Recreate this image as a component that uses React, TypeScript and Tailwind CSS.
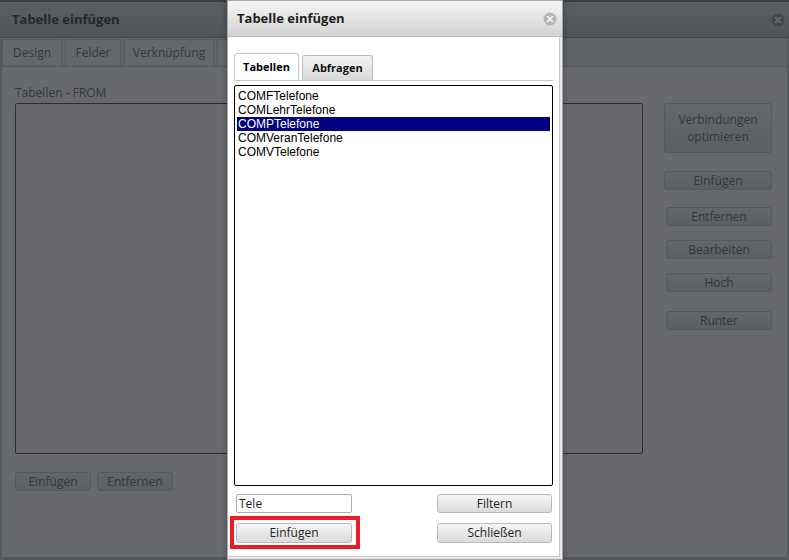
import React from "react";

const ui = { fontFamily: '"Open Sans", "Noto Sans", sans-serif' };
const arial = { fontFamily: '"Liberation Sans", Arial, sans-serif' };

function BgBtn({ children, className = "" }: { children: React.ReactNode; className?: string }) {
  return (
    <div
      className={`flex items-center justify-center rounded-[3px] border border-[#55585c] bg-gradient-to-b from-[#63666a] to-[#5c5f63] text-[12px] text-[#35373a] ${className}`}
    >
      {children}
    </div>
  );
}

function FgBtn({ children, className = "" }: { children: React.ReactNode; className?: string }) {
  return (
    <div
      className={`flex items-center justify-center rounded-[3px] border border-[#b9b9b9] bg-gradient-to-b from-[#f6f6f6] to-[#dadada] text-[12px] text-[#222] ${className}`}
    >
      {children}
    </div>
  );
}

function CloseIcon({ dark }: { dark?: boolean }) {
  return (
    <svg width="14" height="14" viewBox="0 0 14 14">
      <circle cx="7" cy="7" r="6.5" fill={dark ? "#45484c" : "#b5b5b5"} />
      <path d="M4.6 4.6 L9.4 9.4 M9.4 4.6 L4.6 9.4" stroke={dark ? "#6a6d71" : "#f2f2f2"} strokeWidth="1.8" strokeLinecap="round" />
    </svg>
  );
}

export default function App() {
  const items = ["COMFTelefone", "COMLehrTelefone", "COMPTelefone", "COMVeranTelefone", "COMVTelefone"];
  return (
    <div className="relative h-[560px] w-[789px] overflow-hidden bg-[#3b3e43]" style={ui}>
      {/* Background dialog (dimmed) */}
      <div className="flex h-full flex-col pt-[2px]">
        <div className="flex h-[36px] items-center justify-between border-b border-[#46494d] bg-gradient-to-b from-[#5b5e62] to-[#515458] pl-[12px] pr-[4px]">
          <span className="text-[13px] font-bold text-[#27282a]">Tabelle einfügen</span>
          <CloseIcon dark />
        </div>
        <div className="flex flex-1 flex-col border-l-[2px] border-r-[2px] border-b-[3px] border-[#55585c] bg-[#67696d]">
          <div className="flex h-[29px] items-end gap-[3px] border-b border-[#55585b] bg-[#5f6266] pl-0 pr-[2px]">
            <div className="flex h-[27px] w-[60px] items-center justify-center rounded-t-[3px] border border-b-0 border-[#55585c] bg-[#64676b] text-[12px] text-[#37393c]">Design</div>
            <div className="flex h-[27px] w-[56px] items-center justify-center rounded-t-[3px] border border-b-0 border-[#55585c] bg-[#64676b] text-[12px] text-[#37393c]">Felder</div>
            <div className="flex h-[27px] w-[90px] items-center justify-center rounded-t-[3px] border border-b-0 border-[#55585c] bg-[#64676b] text-[12px] text-[#37393c]">Verknüpfung</div>
            <div className="flex h-[27px] w-[60px] items-center justify-center rounded-t-[3px] border border-b-0 border-[#55585c] bg-[#64676b] text-[12px] text-[#37393c]">SQL</div>
          </div>
          <div className="flex flex-1 pl-[13px] pt-[18px]">
            <div className="flex flex-col">
              <div className="text-[12px] leading-[16px] text-[#35373a]">Tabellen - FROM</div>
              <div className="mt-[2px] h-[351px] w-[628px] rounded-[2px] border border-[#2b2d31]" />
              <div className="mt-[18px] flex gap-[6px]">
                <BgBtn className="h-[19px] w-[76px]">Einfügen</BgBtn>
                <BgBtn className="h-[19px] w-[76px]">Entfernen</BgBtn>
              </div>
            </div>
            <div className="ml-[21px] flex w-[108px] flex-col items-end pt-[18px]">
              <BgBtn className="h-[50px] w-[108px] flex-col leading-[17px]">
                <span>Verbindungen</span>
                <span>optimieren</span>
              </BgBtn>
              <BgBtn className="mt-[18px] h-[19px] w-[108px]">Einfügen</BgBtn>
              <BgBtn className="mt-[17px] h-[19px] w-[106px]">Entfernen</BgBtn>
              <BgBtn className="mt-[14px] h-[19px] w-[106px]">Bearbeiten</BgBtn>
              <BgBtn className="mt-[14px] h-[19px] w-[106px]">Hoch</BgBtn>
              <BgBtn className="mt-[19px] h-[19px] w-[106px]">Runter</BgBtn>
            </div>
          </div>
        </div>
      </div>

      {/* Foreground dialog */}
      <div className="absolute left-[227px] top-0 flex h-[560px] w-[336px] flex-col border border-[#a9a9a9] bg-[#e9e9e9] shadow-[0_0_6px_rgba(0,0,0,0.35)]">
        <div className="flex h-[36px] items-center justify-between border-b border-[#bdbdbd] bg-gradient-to-b from-[#f6f6f6] to-[#d3d3d3] pl-[9px] pr-[5px]">
          <span className="text-[13px] font-bold text-[#1e1e1e]">Tabelle einfügen</span>
          <CloseIcon />
        </div>
        <div className="mb-[2px] mr-[2px] flex flex-1 flex-col rounded-tr-[2px] border-r border-b border-[#c9c9c9] bg-white pl-[6px] pr-[6px] pt-[17px]">
          <div className="flex h-[27px] items-end gap-[3px] border-b border-[#c8c8c8]">
            <div className="flex h-[27px] w-[65px] items-center justify-center rounded-t-[3px] border border-b-0 border-[#c5c5c5] bg-white text-[11px] font-bold text-black">Tabellen</div>
            <div className="flex h-[25px] w-[71px] items-center justify-center rounded-t-[3px] border border-b-0 border-[#bdbdbd] bg-gradient-to-b from-[#f3f3f3] to-[#dadada] text-[11px] font-bold text-[#111]">Abfragen</div>
          </div>
          <div className="mt-[4px] h-[401px] rounded-[2px] border border-black px-[2px] pt-[3px]" style={arial}>
            {items.map((t) => (
              <div
                key={t}
                className={`h-[14px] pl-[1px] text-[12px] leading-[14px] ${t === "COMPTelefone" ? "bg-[#000080] text-white" : "text-black"}`}
              >
                {t}
              </div>
            ))}
          </div>
          <div className="mt-[8px] flex justify-between pl-[2px] pr-[1px]">
            <div className="flex h-[19px] w-[116px] items-center rounded-[2px] border border-[#b0b0b0] px-[2px] text-[12px] text-[#222]">Tele</div>
            <FgBtn className="h-[19px] w-[115px]">Filtern</FgBtn>
          </div>
          <div className="mt-[10px] flex justify-between pl-[2px] pr-[1px]">
            <FgBtn className="h-[20px] w-[116px]">Einfügen</FgBtn>
            <FgBtn className="h-[20px] w-[115px]">Schließen</FgBtn>
          </div>
        </div>
      </div>

      {/* Red highlight annotation */}
      <div className="pointer-events-none absolute left-[230px] top-[516px] h-[33px] w-[130px] border-[4px] border-[#ec1c24]" />
    </div>
  );
}
